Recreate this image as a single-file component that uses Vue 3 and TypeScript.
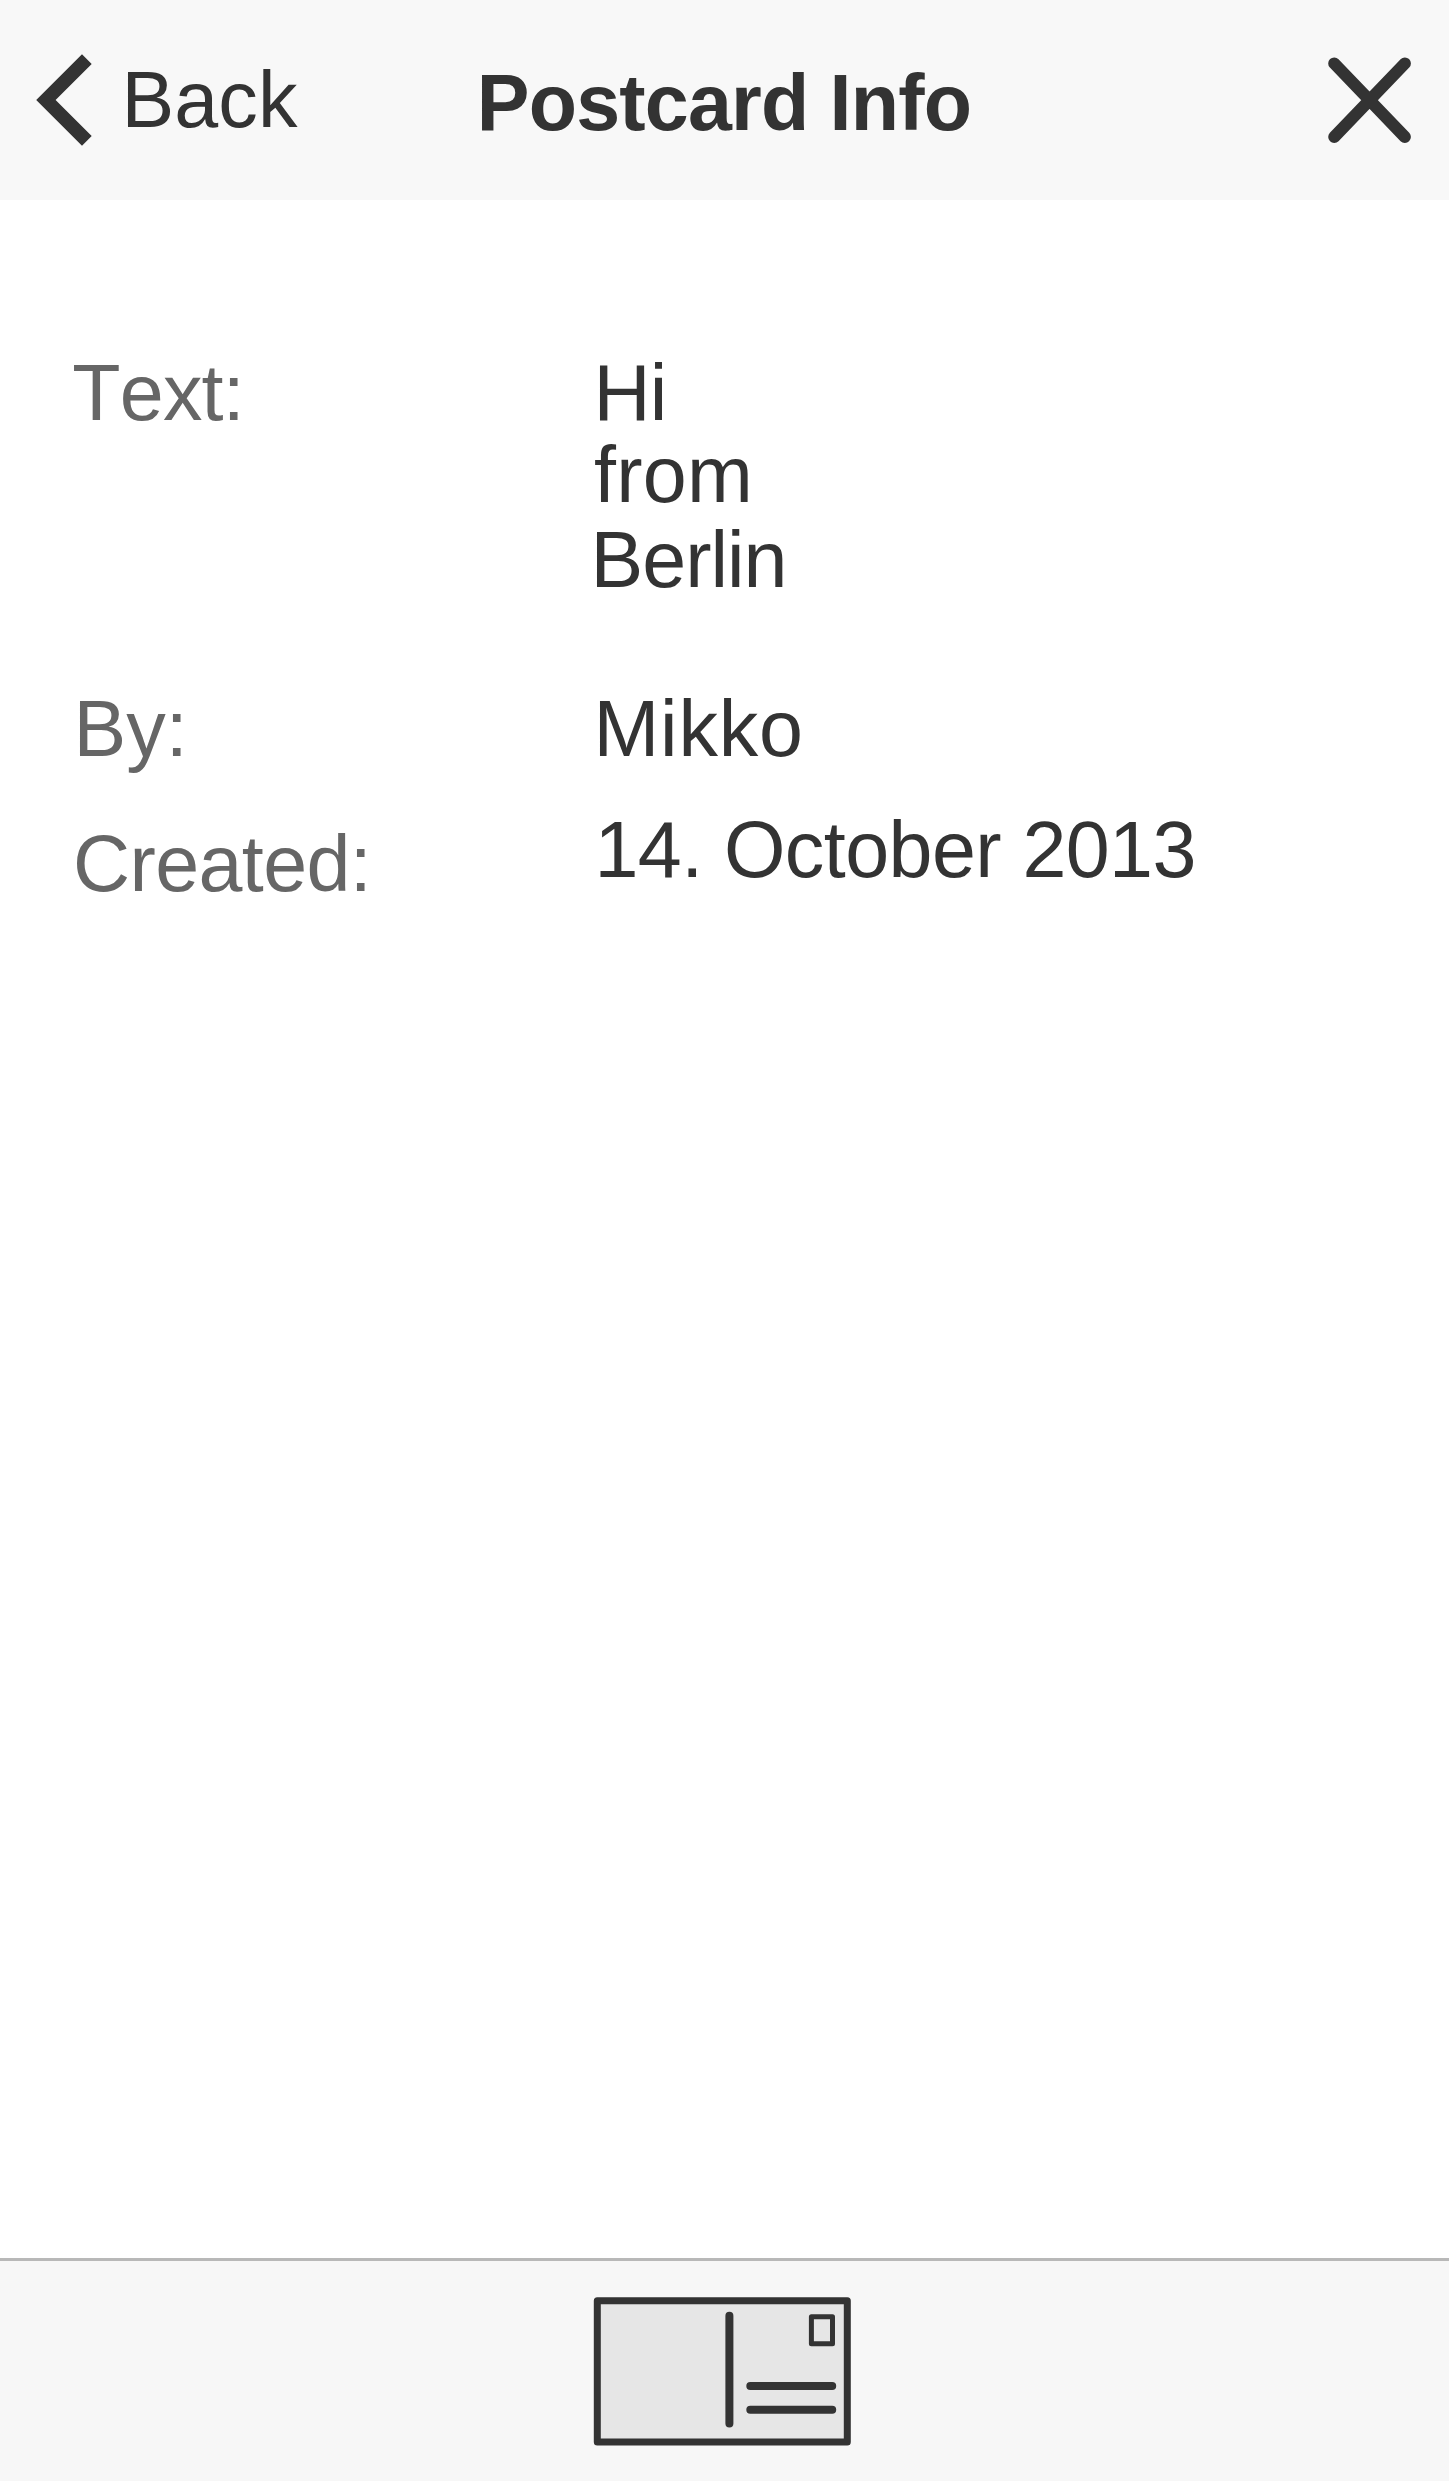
<script setup lang="ts">
interface Entry {
  text: string
  name: string
}

const labels: Entry[] = [
  { text: 'Text:', name: 'text' },
  { text: 'By:', name: 'by' },
  { text: 'Created:', name: 'created' },
]

const values: Entry[] = [
  { text: 'Hi', name: 'hi' },
  { text: 'from', name: 'from' },
  { text: 'Berlin', name: 'berlin' },
  { text: 'Mikko', name: 'author' },
  { text: '14. October 2013', name: 'date' },
]
</script>

<template>
  <div class="screen">
    <header class="bar">
      <button class="back" type="button">
        <svg class="chevron" width="56" height="92" viewBox="0 0 56 92" aria-hidden="true">
          <path d="M46 0.2 55.7 9.9 19.6 46 55.7 82.1 46 91.8 0.2 46Z" fill="#333" />
        </svg>
        <span class="back-text">Back</span>
      </button>
      <h1 class="title">Postcard Info</h1>
      <button class="close" type="button" aria-label="Close">
        <svg width="83" height="86" viewBox="0 0 83 86" aria-hidden="true">
          <path d="M6.2 6.4 76.9 80M76.9 6.4 6.2 80" stroke="#333" stroke-width="12" stroke-linecap="round" />
        </svg>
      </button>
    </header>

    <main class="details">
      <div class="column labels">
        <span v-for="l in labels" :key="l.name" :class="l.name">{{ l.text }}</span>
      </div>
      <div class="column values">
        <span v-for="v in values" :key="v.name" :class="v.name">{{ v.text }}</span>
      </div>
    </main>

    <footer class="toolbar">
      <svg class="postcard" width="259" height="150" viewBox="0 0 259 150" fill="none" stroke="#333" aria-hidden="true">
        <rect x="4.3" y="4.8" width="250" height="141.1" fill="#e6e6e6" stroke-width="7" stroke-linejoin="round" />
        <path d="M136.4 19.7V127.4M157.3 90H239.2M157.3 113.7H239.2" stroke-width="8" stroke-linecap="round" />
        <rect x="218.4" y="20.7" width="21.1" height="27" stroke-width="5" stroke-linejoin="round" />
      </svg>
    </footer>
  </div>
</template>

<style>
body {
  margin: 0;
  background: #fff;
}
</style>

<style scoped>
.screen {
  display: flex;
  flex-direction: column;
  width: 1449px;
  height: 2481px;
  overflow: hidden;
  background: #fff;
  color: #333;
  font-family: "Liberation Sans", Arial, sans-serif;
  font-size: 79px;
  line-height: 80px;
  white-space: nowrap;
}

.bar {
  display: flex;
  flex: none;
  align-items: flex-start;
  box-sizing: border-box;
  height: 200px;
  padding-right: 38px;
  background: #f8f8f8;
}

button {
  display: flex;
  align-items: flex-start;
  padding: 0;
  border: 0;
  background: none;
  color: inherit;
  font: inherit;
}

svg {
  display: block;
  flex: none;
}

.back {
  width: 476.8px;
  box-sizing: border-box;
  padding: 54px 0 0 36px;
}

.back-text {
  margin: 6px 0 0 29.5px;
  letter-spacing: 0.1px;
}

.title {
  margin: 63px 0 0;
  font-size: 79px;
  font-weight: 700;
  line-height: 80px;
  letter-spacing: -0.8px;
}

.close {
  margin: 56.5px 0 0 auto;
}

.details {
  display: flex;
  flex: 1;
  padding: 153px 0 0 73px;
}

.column {
  display: flex;
  flex-direction: column;
}

.labels {
  width: 520.5px;
  color: #666;
}

.text {
  margin-left: -0.7px;
  letter-spacing: -0.8px;
  font-kerning: none;
}

.by {
  margin: 256px 0 0 0.5px;
}

.created {
  margin-top: 55px;
  letter-spacing: -0.6px;
}

.hi {
  letter-spacing: -0.7px;
}

.from {
  margin: 2px 0 0 0.5px;
  letter-spacing: 0.3px;
}

.berlin {
  margin: 5px 0 0 -3px;
  letter-spacing: -1px;
}

.author {
  margin-top: 89px;
  letter-spacing: 0.8px;
}

.date {
  margin: 41px 0 0 1px;
  letter-spacing: -0.57px;
}

.toolbar {
  display: flex;
  flex: none;
  justify-content: flex-start;
  box-sizing: border-box;
  height: 223px;
  padding: 35px 0 0 593px;
  border-top: 3px solid #b8b8b8;
  background: #f7f7f7;
}
</style>
